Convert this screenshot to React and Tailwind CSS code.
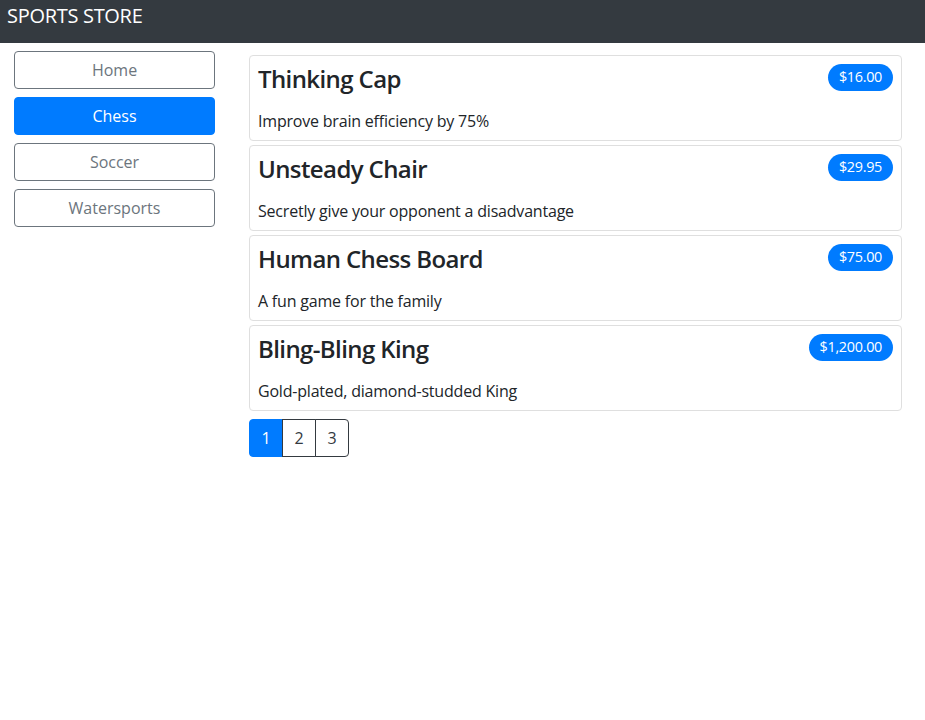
import React from 'react';

const categories = ['Home', 'Chess', 'Soccer', 'Watersports'];

const products = [
  { name: 'Thinking Cap', price: '$16.00', description: 'Improve brain efficiency by 75%' },
  { name: 'Unsteady Chair', price: '$29.95', description: 'Secretly give your opponent a disadvantage' },
  { name: 'Human Chess Board', price: '$75.00', description: 'A fun game for the family' },
  { name: 'Bling-Bling King', price: '$1,200.00', description: 'Gold-plated, diamond-studded King' },
];

const ProductCard = ({ product }) => (
  <div className="border border-[#dfdfdf] rounded-[4px] px-[8px] pt-[8px] pb-[7px]">
    <div className="flex justify-between items-start">
      <h4 className="text-[24px] leading-[29px] font-semibold tracking-[-0.6px] text-[#212529]">{product.name}</h4>
      <span className="h-[27px] px-[11px] flex items-center rounded-full bg-[#007bff] text-white text-[14.4px] leading-none tracking-[-0.3px]">
        {product.price}
      </span>
    </div>
    <div className="mt-[16px] text-[16px] leading-[24px] tracking-[-0.2px] text-[#212529]">{product.description}</div>
  </div>
);

const App = () => {
  return (
    <div className="min-h-screen bg-white font-['Open_Sans',sans-serif]">
      <div className="h-[43px] bg-[#343a40] text-white px-[7px] pt-[1px]">
        <span className="text-[20px] leading-[30px] tracking-[-0.3px]">SPORTS STORE</span>
      </div>

      <div className="flex">
        <div className="w-[231px] pl-[14px] pr-[16px] pt-[8px] flex flex-col gap-[8px]">
          {categories.map((c) => (
            <button
              key={c}
              className={
                c === 'Chess'
                  ? 'h-[38px] rounded-[4px] border border-[#007bff] bg-[#007bff] text-white text-[16px]'
                  : 'h-[38px] rounded-[4px] border border-[#6c757d] bg-white text-[#6c757d] text-[16px]'
              }
            >
              {c}
            </button>
          ))}
        </div>

        <div className="flex-1 pl-[18px] pr-[23px] pt-[12px]">
          <div className="flex flex-col gap-[4px]">
            {products.map((p) => (
              <ProductCard key={p.name} product={p} />
            ))}
          </div>

          <div className="mt-[8px] flex">
            <button className="h-[38px] w-[34px] rounded-l-[4px] border border-[#007bff] bg-[#007bff] text-white text-[16px]">1</button>
            <button className="h-[38px] w-[34px] -ml-px border border-[#343a40] bg-white text-[#343a40] text-[16px]">2</button>
            <button className="h-[38px] w-[34px] -ml-px rounded-r-[4px] border border-[#343a40] bg-white text-[#343a40] text-[16px]">3</button>
          </div>
        </div>
      </div>
    </div>
  );
};

export default App;
